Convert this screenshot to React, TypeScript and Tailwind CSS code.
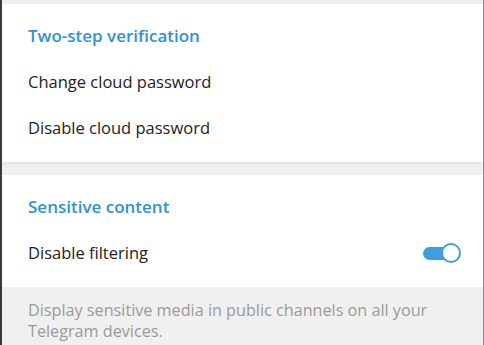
import React from 'react'

const Toggle = ({ on }: { on: boolean }) => {
  return (
    <div className="relative w-[38px] h-[20px] flex items-center">
      <div
        className={`w-[34px] h-[13px] rounded-full ${on ? 'bg-[#3d9ee0]' : 'bg-[#cfcfcf]'}`}
      />
      <div
        className={`absolute top-0 w-[20px] h-[20px] rounded-full bg-white border-2 ${
          on ? 'right-0 border-[#3d9ee0]' : 'left-0 border-[#cfcfcf]'
        }`}
      />
    </div>
  )
}

const Row = ({ label, right }: { label: string; right?: React.ReactNode }) => {
  return (
    <div className="flex items-center justify-between h-[46px] pl-[26px] pr-[22px] text-[16.5px] text-[#222]">
      <span>{label}</span>
      {right}
    </div>
  )
}

const Header = ({ title }: { title: string }) => {
  return (
    <div className="pl-[26px] h-[20px] leading-[20px] text-[17px] font-semibold text-[#2f92d3]">
      {title}
    </div>
  )
}

const App = () => {
  return (
    <div
      className="w-[484px] h-[345px] overflow-hidden bg-[#f0f0f0] border-l-2 border-l-[#3a3a3a] border-r border-r-[#8a8a8a]"
      style={{ fontFamily: '"Open Sans", "Noto Sans", sans-serif' }}
    >
      <div className="h-[4px]" />
      <div className="bg-white pt-[22px] pb-[11px] shadow-[0_1px_4px_rgba(0,0,0,0.08)]">
        <Header title="Two-step verification" />
        <div className="h-[13px]" />
        <Row label="Change cloud password" />
        <Row label="Disable cloud password" />
      </div>
      <div className="h-[13px]" />
      <div className="bg-white pt-[22px] pb-[11px]">
        <Header title="Sensitive content" />
        <div className="h-[13px]" />
        <Row label="Disable filtering" right={<Toggle on />} />
      </div>
      <div className="pl-[26px] pr-[20px] pt-[13px] text-[16.2px] leading-[21px] text-[#9a9a9a]">
        Display sensitive media in public channels on all your Telegram devices.
      </div>
    </div>
  )
}

export default App
